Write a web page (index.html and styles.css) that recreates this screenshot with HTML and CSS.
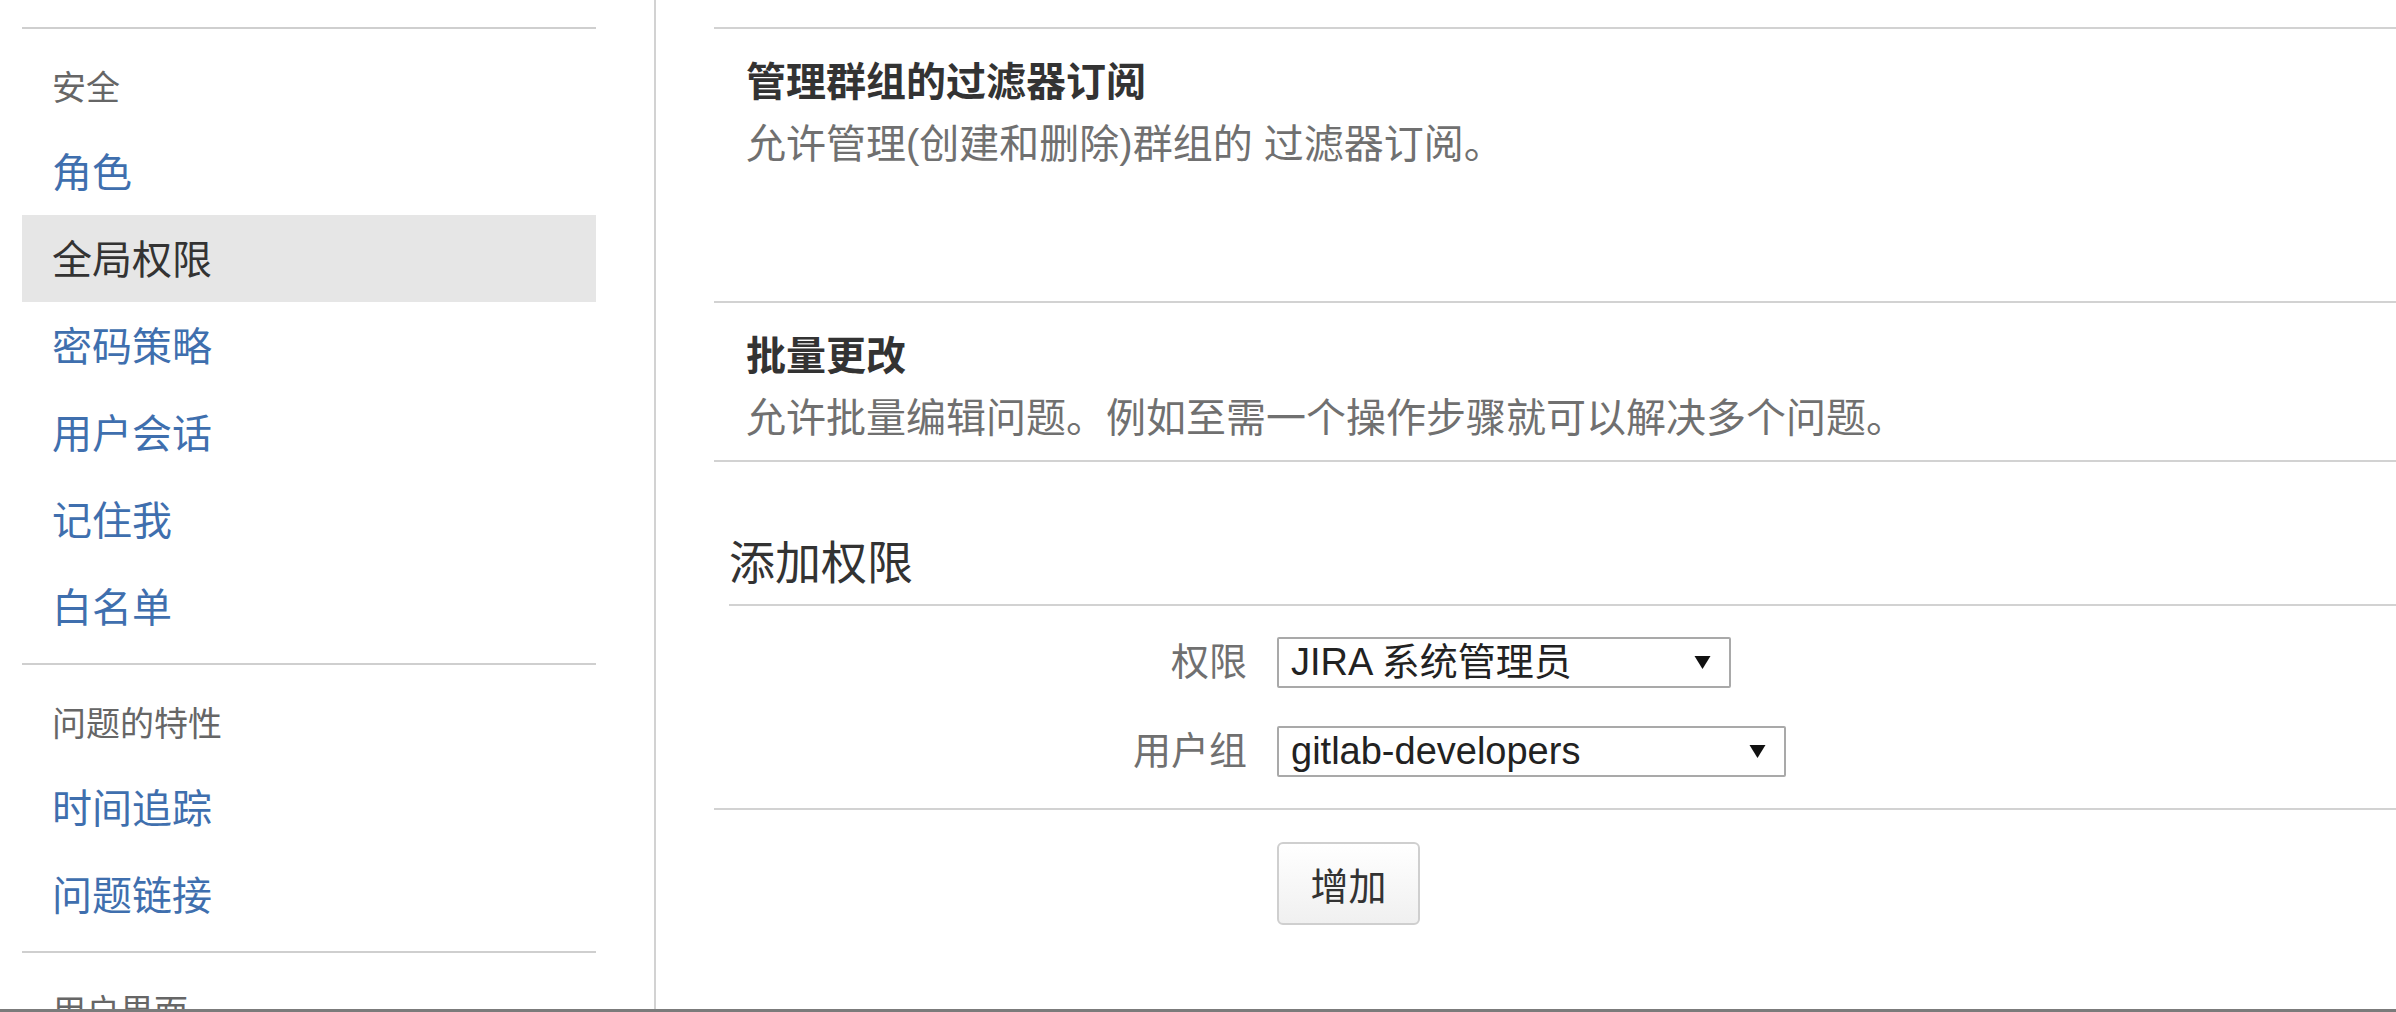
FILE: index.html
```html
<!DOCTYPE html>
<html lang="zh-CN">
<head>
<meta charset="utf-8">
<title>全局权限</title>
<link rel="stylesheet" href="styles.css">
</head>
<body>
<div class="page">
  <nav class="sidebar">
    <div class="nav-section">
      <h3 class="nav-heading">安全</h3>
      <a class="nav-link" href="#">角色</a>
      <a class="nav-link is-active" href="#">全局权限</a>
      <a class="nav-link" href="#">密码策略</a>
      <a class="nav-link" href="#">用户会话</a>
      <a class="nav-link" href="#">记住我</a>
      <a class="nav-link" href="#">白名单</a>
    </div>
    <div class="nav-section">
      <h3 class="nav-heading">问题的特性</h3>
      <a class="nav-link" href="#">时间追踪</a>
      <a class="nav-link" href="#">问题链接</a>
    </div>
    <div class="nav-section">
      <h3 class="nav-heading">用户界面</h3>
      <a class="nav-link" href="#">用户默认设置</a>
    </div>
  </nav>
  <main class="main">
    <div class="perm-list">
      <div class="perm-row perm-row--tall">
        <div class="perm-name">管理群组的过滤器订阅</div>
        <div class="perm-desc">允许管理(创建和删除)群组的 过滤器订阅。</div>
      </div>
      <div class="perm-row">
        <div class="perm-name">批量更改</div>
        <div class="perm-desc">允许批量编辑问题。例如至需一个操作步骤就可以解决多个问题。</div>
      </div>
    </div>
    <section class="add-section">
      <h2 class="add-title">添加权限</h2>
      <div class="field-group">
        <div class="field">
          <label class="field-label">权限</label>
          <div class="select select--perm"><span>JIRA 系统管理员</span><svg class="arrow" width="17" height="15" viewBox="0 0 17 15"><path d="M0.5 1h16L8.5 14z" fill="#111"/></svg></div>
        </div>
        <div class="field">
          <label class="field-label">用户组</label>
          <div class="select select--group"><span>gitlab-developers</span><svg class="arrow" width="17" height="15" viewBox="0 0 17 15"><path d="M0.5 1h16L8.5 14z" fill="#111"/></svg></div>
        </div>
      </div>
      <div class="button-row">
        <button class="btn" type="button">增加</button>
      </div>
    </section>
  </main>
</div>
</body>
</html>
```
FILE: styles.css
```css
html, body {
  margin: 0;
  padding: 0;
  background: #fff;
}
body {
  font-family: "Liberation Sans", "Noto Sans CJK SC", sans-serif;
  color: #333;
}
.page {
  display: flex;
  height: 1012px;
  box-sizing: border-box;
  border-bottom: 3px solid #7b7b7b;
  overflow: hidden;
}
.sidebar {
  width: 656px;
  flex: none;
  box-sizing: border-box;
  padding: 27px 58px 0 22px;
  border-right: 2px solid #d2d2d2;
}
.nav-section {
  border-top: 2px solid #cfcfcf;
  padding: 14px 0 13px;
}
.nav-heading {
  margin: 0;
  height: 85px;
  line-height: 90px;
  padding-left: 30px;
  font-size: 34px;
  font-weight: normal;
  color: #666;
}
.nav-link {
  display: block;
  height: 87px;
  line-height: 91px;
  padding-left: 30px;
  font-size: 40px;
  color: #3f6fae;
  text-decoration: none;
}
.nav-link.is-active {
  background: #e6e6e6;
  color: #333;
}
.main {
  flex: 1;
  padding: 27px 0 0 58px;
}
.perm-list {
  border-bottom: 2px solid #d2d2d2;
}
.perm-row {
  border-top: 2px solid #d2d2d2;
  padding: 21px 32px 12px;
}
.perm-row--tall {
  padding-bottom: 127px;
}
.perm-name {
  font-size: 40px;
  line-height: 64px;
  font-weight: bold;
  color: #333;
}
.perm-desc {
  font-size: 40px;
  line-height: 60px;
  color: #707070;
}
.add-title {
  margin: 71px 0 0 15px;
  padding-bottom: 11px;
  border-bottom: 2px solid #d2d2d2;
  font-size: 46px;
  line-height: 60px;
  font-weight: normal;
  color: #333;
}
.field-group {
  display: flex;
  flex-direction: column;
  gap: 38px;
  padding: 31px 0;
  border-bottom: 2px solid #d2d2d2;
}
.field {
  display: flex;
  align-items: center;
  height: 51px;
}
.field-label {
  width: 533px;
  margin-right: 30px;
  text-align: right;
  font-size: 38px;
  line-height: 51px;
  color: #707070;
}
.select {
  box-sizing: border-box;
  height: 51px;
  display: flex;
  align-items: center;
  justify-content: space-between;
  padding: 0 18px 0 12px;
  border: 2px solid #a9a9a9;
  border-radius: 2px;
  background: #fff;
  font-size: 38px;
  line-height: 47px;
  color: #222;
}
.select--perm {
  width: 454px;
}
.select--group {
  width: 509px;
}
.arrow {
  flex: none;
}
.button-row {
  padding: 32px 0 0 563px;
}
.btn {
  width: 143px;
  height: 83px;
  border: 2px solid #cfcfcf;
  border-radius: 6px;
  background: linear-gradient(#ffffff, #f0f0f0);
  font-family: "Liberation Sans", "Noto Sans CJK SC", sans-serif;
  font-size: 38px;
  color: #333;
  padding: 0;
}
```
